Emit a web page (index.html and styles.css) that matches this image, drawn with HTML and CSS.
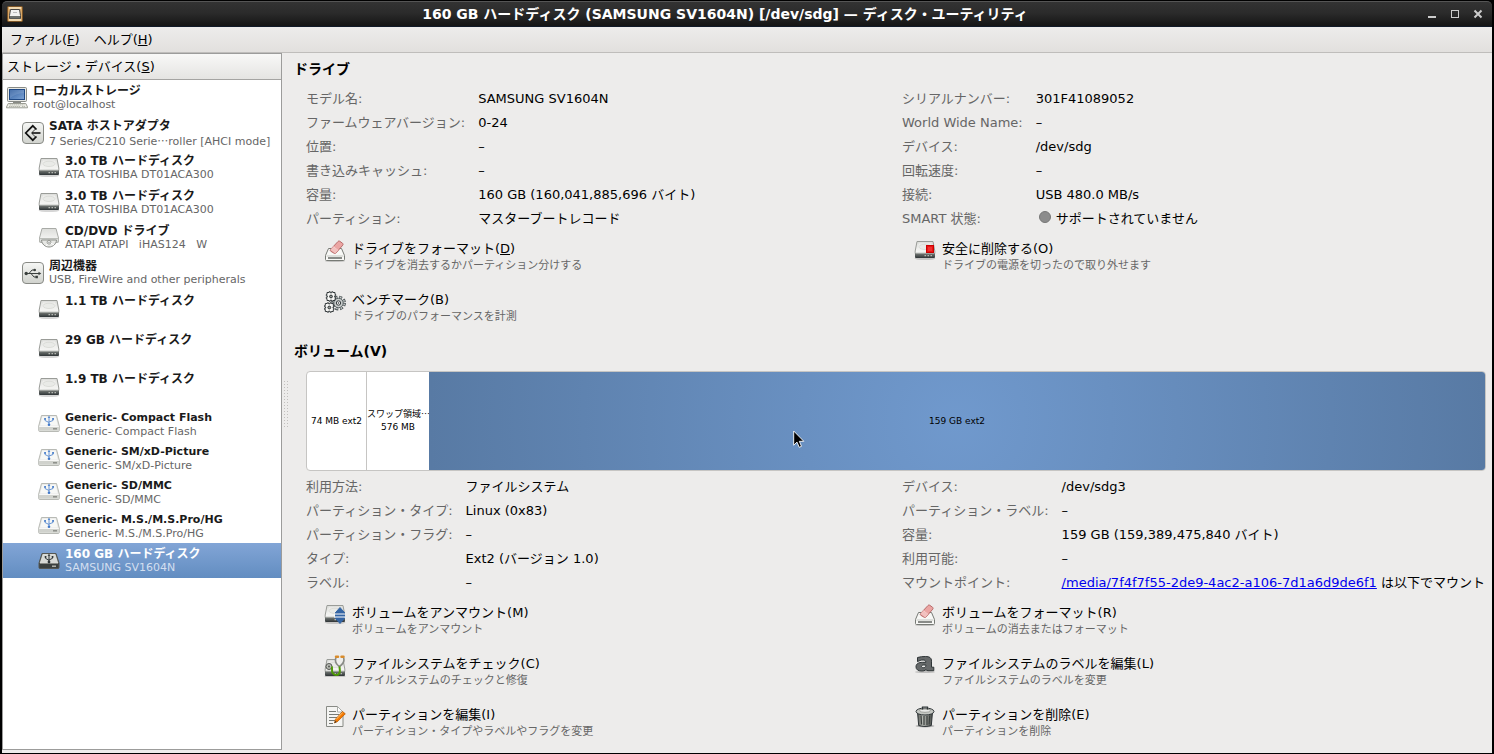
FILE: index.html
```
<!DOCTYPE html>
<html lang="ja">
<head>
<meta charset="utf-8">
<title>ディスク・ユーティリティ</title>
<link rel="stylesheet" href="styles.css">
</head>
<body>
<svg class="defs" aria-hidden="true">
  <defs>
    <linearGradient id="g-top" x1="0" y1="0" x2="0" y2="1"><stop offset="0" stop-color="#dcdddA"/><stop offset="1" stop-color="#fbfbfa"/></linearGradient>
    <linearGradient id="g-dark" x1="0" y1="0" x2="0" y2="1"><stop offset="0" stop-color="#7b7f7b"/><stop offset="1" stop-color="#2e3436"/></linearGradient>
    <linearGradient id="g-box" x1="0" y1="0" x2="0" y2="1"><stop offset="0" stop-color="#f6f7f5"/><stop offset="1" stop-color="#d0d2cd"/></linearGradient>
    <linearGradient id="g-screen" x1="0" y1="0" x2="1" y2="1"><stop offset="0" stop-color="#2d5c9f"/><stop offset="1" stop-color="#7fa5d6"/></linearGradient>
    <linearGradient id="g-can" x1="0" y1="0" x2="1" y2="0"><stop offset="0" stop-color="#555753"/><stop offset=".35" stop-color="#b8bbb5"/><stop offset="1" stop-color="#4a4d49"/></linearGradient>
    <symbol id="hdd" viewBox="0 0 22 22">
      <ellipse cx="11" cy="18.600" rx="10.500" ry="1.500" fill="#000" opacity=".16"/>
      <path d="M3 1.500h16l1.800 9.500v2.500H1.200V11z" fill="url(#g-top)" stroke="#9a9c98"/>
      <path d="M5 3.500h12l1.800 7.500c-4 2-11.600 2-15.600 0z" fill="#f1f1ef" opacity=".8"/>
      <path d="M5 6.500C6 3.500 16 3.500 17 6.500c.5 4-12.500 4-12 0z" fill="#e9eae7" stroke="#d4d6d1" stroke-width=".7"/>
      <path d="M1 13h20v3.700c0 .8-.4 1.300-1.200 1.300H2.200c-.8 0-1.200-.5-1.200-1.300z" fill="url(#g-dark)"/>
      <path d="M1.500 13h19" stroke="#c5c7c3"/>
      <path d="M10.500 15.700h1.500M13.500 15.700H15M16.500 15.700H18" stroke="#b5b8b2" stroke-width="1.300"/>
    </symbol>
    <symbol id="card" viewBox="0 0 22 22">
      <path d="M3.500 2.500h15L21.300 13v4.500c0 .6-.4 1-1 1H1.700c-.6 0-1-.4-1-1V13z" fill="#e2e3e0" stroke="#b8bab5"/>
      <path d="M4.300 3.400h13.400l2.200 9.100H2.100z" fill="#f7f8f6"/>
      <path d="M1.200 13.500h19.600v4H1.200z" fill="#d0d2cd"/><path d="M1.200 13.300h19.600" stroke="#fff"/>
      <path d="M15 15.800h4" stroke="#888a85" stroke-width="1.400"/>
      <path d="M11 4v8M7 6v1.500l4 2M15 6v1.500l-4 1.500" fill="none" stroke="#5a8bd0" stroke-width=".9"/>
      <path d="m11 2.800 1.300 2H9.700zM6.200 5h1.700v1.700H6.200zM14.200 5h1.700v1.700h-1.700z" fill="#4078c8"/><circle cx="11" cy="11.800" r="1.300" fill="#4078c8"/>
    </symbol>
    <symbol id="usbdisk" viewBox="0 0 22 22">
      <path d="M4 3.500h14l3 9.500v4.500c0 .6-.4 1-1 1H2c-.6 0-1-.4-1-1V13z" fill="#3b403e" stroke="#555753"/>
      <path d="M4.600 4h12.800l2.900 9H1.700z" fill="#d8dad6"/>
      <path d="M2 13.500h18" stroke="#888a85"/><path d="M14 16.200h4" stroke="#babdb6" stroke-width="1.400"/>
      <path d="M11 5v7M7.500 7v1.300l3.500 2M14.500 7v1.300L11 10" fill="none" stroke="#2e3436"/>
      <path d="m11 3.700 1.400 2H9.600zM6.700 6h1.700v1.700H6.700zM13.700 6h1.700v1.700h-1.700z" fill="#2e3436"/><circle cx="11" cy="12" r="1.400" fill="#2e3436"/>
    </symbol>
    <symbol id="cdrom" viewBox="0 0 22 22">
      <path d="M4 1.500h14l2.500 9.500v3.500c0 .8-.4 1-1 1h-17c-.6 0-1-.4-1-1V11z" fill="url(#g-top)" stroke="#a9aba7"/>
      <path d="M1.500 11.500h19v3.300h-19z" fill="#dcdedb" stroke="#b0b2ad" stroke-width=".8"/>
      <path d="M3.500 13h15c-.3 4-3.500 7-7.500 7s-7.200-3-7.500-7z" fill="#e7e8e5" stroke="#8d8f8a"/>
      <path d="m11 15-3 4M11 15l5 3" stroke="#fff"/>
      <circle cx="11" cy="15.200" r="1.900" fill="#fff" stroke="#999b96"/><circle cx="11" cy="15.200" r=".6" fill="#555753"/>
    </symbol>
    <symbol id="computer" viewBox="0 0 22 22">
      <rect x="1.500" y=".5" width="19" height="14" rx="1" fill="#e7e8e4" stroke="#888a85"/>
      <rect x="3.500" y="2.500" width="15" height="10" fill="url(#g-screen)" stroke="#204a87"/>
      <path d="M4 3h14v3C12 6.500 8 8 4 11z" fill="#fff" opacity=".12"/>
      <path d="M7 15h8v1.500H7z" fill="#888a85"/>
      <path d="M2.200 16.500h17.600l1.700 3.500v.8H.5V20z" fill="#eeeee8" stroke="#9b9d94"/>
      <path d="M3.500 17.900h15M3 19.500h11M16 19.500h3" stroke="#b6b8ad" stroke-dasharray="1.500 .5"/>
    </symbol>
    <symbol id="sata" viewBox="0 0 22 22">
      <rect x=".5" y=".5" width="21" height="21" rx="3.500" fill="url(#g-box)" stroke="#888a85"/>
      <path d="m14.500 7.500-3.700-3.700L3.700 11l7.100 7.200 3.700-3.700" fill="none" stroke="#111" stroke-width="1.700"/>
      <path d="M10 11h8.500" fill="none" stroke="#111" stroke-width="1.600"/>
      <path d="m13.500 7-4 4 4 4" fill="none" stroke="#111" stroke-width=".8"/>
    </symbol>
    <symbol id="usb" viewBox="0 0 22 22">
      <rect x=".5" y=".5" width="21" height="21" rx="3.500" fill="url(#g-box)" stroke="#888a85"/>
      <path d="M4 11.500h13M7 11.500l3-3.500h2.500M9 11.500l3 3.500h2" fill="none" stroke="#3b403e"/>
      <circle cx="4.200" cy="11.500" r="1.700" fill="#3b403e"/><circle cx="12.700" cy="8" r="1.300" fill="#3b403e"/><path d="m16.500 9.800 2.800 1.700-2.800 1.700zM13.500 13.800h2.400v2.400h-2.400z" fill="#3b403e"/>
    </symbol>
    <symbol id="erase" viewBox="0 0 22 22">
      <ellipse cx="11" cy="21" rx="10" ry="1" fill="#000" opacity=".18"/>
      <path d="M4.500 8.500h13l3 7v4c0 .6-.4 1-1 1h-17c-.6 0-1-.4-1-1v-4z" fill="#f8f8f6" stroke="#777a75"/>
      <path d="M2.500 16h17" stroke="#c5c7c2"/><path d="M4 18h14" stroke="#4d504d" stroke-width="1.300"/>
      <path d="m6.500 9.500 7.500-8c.5-.6 1.200-.6 1.800-.2l2.800 2c.6.500.6 1.200.2 1.800l-6.800 8c-.5.600-1.200.6-1.800.2L6.700 11.200c-.6-.5-.6-1.200-.2-1.700z" fill="#eba5a3" stroke="#b86b6a"/>
      <path d="m9.300 6.600 4.800 3.800" stroke="#f7d1d0"/><path d="m6.500 9.700 2.600-2.900 4.800 3.800-2.400 2.800z" fill="#f2c1bf"/>
    </symbol>
    <symbol id="gears" viewBox="0 0 22 22">
      <g fill="none">
        <circle cx="14.500" cy="12" r="5.800" stroke="#444d4f" stroke-width="3.200" stroke-dasharray="2.800 1.755"/>
        <circle cx="14.500" cy="12" r="5.700" stroke="#c8cccb" stroke-width="1.800" stroke-dasharray="1.500 2.977" stroke-dashoffset="-.65"/>
        <circle cx="14.500" cy="12" r="4.700" fill="#c8cccb" stroke="#5c6567"/><circle cx="14.500" cy="12" r="2.200" fill="#f3f3f2" stroke="#353c3e"/><circle cx="14.500" cy="12" r=".8" fill="#2e3436"/>
        <path d="M3 1.500h2V.8h1.300v1h1.400v-1H9v.7h2v2h.7v1.300h-1v1.400h1v1.300H11v2H9v.7H7.700v-1H6.300v1H5v-.7H3v-2h-.7V6.200h1V4.800h-1V3.500H3z" fill="#f6f6f4" stroke="#33393b"/>
        <circle cx="7" cy="5.500" r="1.400" fill="#9a9d99" stroke="#2e3436"/>
        <path d="M1.300 12.500h2v-.7h1.300v1H6v-1h1.300v.7h2v2h.7v1.300H9v1.400h1v1.300h-.7v2h-2v.7H6v-1H4.600v1H3.300v-.7h-2v-2H.6v-1.300h1v-1.400h-1v-1.300h.7z" fill="#f6f6f4" stroke="#33393b"/>
        <circle cx="5.300" cy="16.500" r="1.400" fill="#9a9d99" stroke="#2e3436"/>
      </g>
    </symbol>
    <symbol id="detach" viewBox="0 0 22 22">
      <use href="#hdd" width="22" height="22"/><rect x="12.500" y="5.500" width="7" height="7" fill="#e81515" stroke="#c00"/><rect x="14" y="7" width="4" height="4" fill="#f03030"/>
    </symbol>
    <symbol id="unmount" viewBox="0 0 22 22">
      <use href="#hdd" width="22" height="22"/><path d="M10.500 9.500h11v4.500h-11z" fill="#fff"/><path d="M16 3.500 20.800 9h-9.600zM16 19.500 11.200 14h9.600z" fill="#3465a4" stroke="#3465a4" stroke-linejoin="round"/><path d="M11 11.500h10" stroke="#3465a4" stroke-width="2"/>
    </symbol>
    <symbol id="check" viewBox="0 0 22 22">
      <use href="#hdd" y="3" width="22" height="22"/>
      <circle cx="5" cy="11.500" r="3" fill="#babdb6" stroke="#555753"/><circle cx="5" cy="11.500" r="1" fill="#555753"/>
      <path d="M12 2.500c-1.500 4 .5 7 3.500 9 3-2 5.500-5 4-9" fill="#eeeeec" stroke="#888a85" stroke-width="1.600"/>
      <path d="M12 1.700h2M17.500 1.700h2" stroke="#d98b2b" stroke-width="2.500" stroke-linecap="round"/>
      <path d="M7.500 11.500c1.500 2-.5 4 1.200 6.500 1.500 2.500 5.300 3 6.800 0 1-2 0-4 0-6.500" fill="none" stroke="#4e9a06" stroke-width="2"/>
    </symbol>
    <symbol id="edit" viewBox="0 0 22 22">
      <path d="M2.500.5h11L19 6v14.500H2.500z" fill="#f4f4f2" stroke="#888a85" stroke-linejoin="round"/>
      <path d="M13.500.5V6H19z" fill="#fff" stroke="#aaaca8"/>
      <path d="M5 5.500h7M5 8.500h10M5 11.500h8M5 14.500h6M5 17.500h4" stroke="#777a75"/>
      <path d="m18.500 5.500 2.800 2.300-7.500 7.500-3.300 1.700 1-3.800z" fill="#f57900" stroke="#b85b00" stroke-width=".8"/><path d="m18.800 6.400-6.600 7" stroke="#fdc070"/><path d="m10.500 17 .6-2 1.500 1z" fill="#2e3436"/>
    </symbol>
    <symbol id="label" viewBox="0 0 22 22">
      <ellipse cx="11" cy="17" rx="10" ry="1" fill="#000" opacity=".2"/>
      <path d="M3.500 6.700V2.500C6 1.700 9 1.500 11.500 1.500c4 0 6 1.300 6 4.700v6h2.300v3.500H14c-1 0-1.500-.3-2-1-1.200 1-2.700 1.300-4.500 1.300C4 16 2 14.500 2 11.800 2 8.800 4.700 7.300 8.500 7.300h3.300C11.800 5.500 10.800 5 9 5 7 5 5.300 5.700 3.500 6.700zM11.800 10H9.700c-1.400 0-2.200.5-2.200 1.400 0 .9.700 1.300 1.800 1.300 1.500 0 2.500-.8 2.500-2z" fill="#66696a" stroke="#2e3436" fill-rule="evenodd"/>
    </symbol>
    <symbol id="trash" viewBox="0 0 22 22">
      <ellipse cx="11" cy="20" rx="9.500" ry="1.500" fill="#000" opacity=".25"/>
      <path d="M3.500 6h15l-1.200 13.500c-3.500 1.300-9.100 1.300-12.600 0z" fill="url(#g-can)" stroke="#2e3436"/>
      <path d="M7 9.500l.6 9M10 10v9M13 10v9M15.700 9.500l-.6 9" stroke="#3b403e" stroke-width="1.200"/>
      <ellipse cx="11" cy="5.500" rx="9" ry="3.500" fill="#c5c8c3" stroke="#2e3436"/><ellipse cx="11" cy="4.700" rx="5.500" ry="1.600" fill="#e9eae7" stroke="#888a85" stroke-width=".7"/>
      <path d="M8.500 3.500V1h5v2.500" fill="none" stroke="#2e3436" stroke-width="1.200"/>
    </symbol>
  </defs>
</svg>

<div class="window">
  <header class="titlebar">
    <svg class="app-icon" viewBox="0 0 16 16" aria-hidden="true"><rect x=".5" y=".5" width="15" height="15" rx="1" fill="#d9a867" stroke="#7b5427"/><path d="M2 1h12v2H2zM2 13h12v2H2z" fill="#f1d9b0"/><path d="M3.500 3.500h9l1 6v3h-11v-3z" fill="#f2f2f0" stroke="#444"/><path d="M3 10h10v2.500H3z" fill="#6d706c"/><path d="M6 6.500h4" stroke="#bbb"/></svg>
    <h1 class="title">160 GB ハードディスク (SAMSUNG SV1604N) [/dev/sdg] — ディスク・ユーティリティ</h1>
    <div class="controls">
      <button type="button" aria-label="最小化"><svg viewBox="0 0 10 10"><path d="M1 8h8" stroke="#ccc" stroke-width="2"/></svg></button>
      <button type="button" aria-label="最大化"><svg viewBox="0 0 10 10"><path d="M1 1.500h8" stroke="#ccc" stroke-width="1"/><rect x="1.500" y="1.500" width="7" height="7" fill="none" stroke="#ccc"/></svg></button>
      <button type="button" aria-label="閉じる"><svg viewBox="0 0 10 10"><path d="m1.500 1.500 7 7m0-7-7 7" stroke="#ccc" stroke-width="2"/></svg></button>
    </div>
  </header>
  <nav class="menubar">
    <button type="button">ファイル(<u>F</u>)</button>
    <button type="button">ヘルプ(<u>H</u>)</button>
  </nav>
  <div class="body">
    <aside class="sidebar">
      <h2 class="side-head">ストレージ・デバイス(<u>S</u>)</h2>
      <ul class="tree">
        <li class="node"><svg><use href="#computer"/></svg><p><b>ローカルストレージ</b><span>root@localhost</span></p></li>
        <li class="node level-1"><svg><use href="#sata"/></svg><p><b>SATA ホストアダプタ</b><span>7 Series/C210 Serie<i class="dots">…</i>roller [AHCI mode]</span></p></li>
        <li class="node level-2"><svg><use href="#hdd"/></svg><p><b>3.0 TB ハードディスク</b><span>ATA TOSHIBA DT01ACA300</span></p></li>
        <li class="node level-2"><svg><use href="#hdd"/></svg><p><b>3.0 TB ハードディスク</b><span>ATA TOSHIBA DT01ACA300</span></p></li>
        <li class="node level-2"><svg><use href="#cdrom"/></svg><p><b>CD/DVD ドライブ</b><span>ATAPI ATAPI &nbsp; iHAS124 &nbsp; W</span></p></li>
        <li class="node level-1"><svg><use href="#usb"/></svg><p><b>周辺機器</b><span>USB, FireWire and other peripherals</span></p></li>
        <li class="node level-2 tall"><svg><use href="#hdd"/></svg><p><b>1.1 TB ハードディスク</b></p></li>
        <li class="node level-2 tall"><svg><use href="#hdd"/></svg><p><b>29 GB ハードディスク</b></p></li>
        <li class="node level-2 tall"><svg><use href="#hdd"/></svg><p><b>1.9 TB ハードディスク</b></p></li>
        <li class="node level-2 latin"><svg><use href="#card"/></svg><p><b>Generic- Compact Flash</b><span>Generic- Compact Flash</span></p></li>
        <li class="node level-2 latin"><svg><use href="#card"/></svg><p><b>Generic- SM/xD-Picture</b><span>Generic- SM/xD-Picture</span></p></li>
        <li class="node level-2 latin"><svg><use href="#card"/></svg><p><b>Generic- SD/MMC</b><span>Generic- SD/MMC</span></p></li>
        <li class="node level-2 latin"><svg><use href="#card"/></svg><p><b>Generic- M.S./M.S.Pro/HG</b><span>Generic- M.S./M.S.Pro/HG</span></p></li>
        <li class="node level-2 selected"><svg><use href="#usbdisk"/></svg><p><b>160 GB ハードディスク</b><span>SAMSUNG SV1604N</span></p></li>
      </ul>
    </aside>
    <div class="splitter"></div>
    <main class="main">
      <section>
        <h2 class="heading">ドライブ</h2>
        <div class="facts">
          <dl>
            <dt>モデル名:</dt><dd>SAMSUNG SV1604N</dd>
            <dt>ファームウェアバージョン:</dt><dd>0-24</dd>
            <dt>位置:</dt><dd>–</dd>
            <dt>書き込みキャッシュ:</dt><dd>–</dd>
            <dt>容量:</dt><dd>160 GB (160,041,885,696 バイト)</dd>
            <dt>パーティション:</dt><dd>マスターブートレコード</dd>
          </dl>
          <dl>
            <dt>シリアルナンバー:</dt><dd>301F41089052</dd>
            <dt>World Wide Name:</dt><dd>–</dd>
            <dt>デバイス:</dt><dd>/dev/sdg</dd>
            <dt>回転速度:</dt><dd>–</dd>
            <dt>接続:</dt><dd>USB 480.0 MB/s</dd>
            <dt>SMART 状態:</dt><dd class="smart">サポートされていません</dd>
          </dl>
        </div>
        <div class="actions">
          <button type="button" class="action"><svg><use href="#erase"/></svg><span class="name">ドライブをフォーマット(<u>D</u>)</span><span class="hint">ドライブを消去するかパーティション分けする</span></button>
          <button type="button" class="action"><svg><use href="#detach"/></svg><span class="name">安全に削除する(O)</span><span class="hint">ドライブの電源を切ったので取り外せます</span></button>
          <button type="button" class="action"><svg><use href="#gears"/></svg><span class="name">ベンチマーク(B)</span><span class="hint">ドライブのパフォーマンスを計測</span></button>
        </div>
      </section>
      <section class="volumes">
        <h2 class="heading">ボリューム(V)</h2>
        <div class="bar">
          <div class="part part-boot">74 MB ext2</div>
          <div class="part part-swap">スワップ領域<i class="dots">…</i><br>576 MB</div>
          <div class="part part-root">159 GB ext2</div>
          <svg class="pointer" viewBox="0 0 12 19" aria-hidden="true"><path d="M.7 1v14.200l3.300-3.100 2.200 5.200 2.300-1-2.200-5h4.500z" fill="#000" stroke="#fff" stroke-width=".9"/></svg>
        </div>
        <div class="facts">
          <dl>
            <dt>利用方法:</dt><dd>ファイルシステム</dd>
            <dt>パーティション・タイプ:</dt><dd>Linux (0x83)</dd>
            <dt>パーティション・フラグ:</dt><dd>–</dd>
            <dt>タイプ:</dt><dd>Ext2 (バージョン 1.0)</dd>
            <dt>ラベル:</dt><dd>–</dd>
          </dl>
          <dl>
            <dt>デバイス:</dt><dd>/dev/sdg3</dd>
            <dt>パーティション・ラベル:</dt><dd>–</dd>
            <dt>容量:</dt><dd>159 GB (159,389,475,840 バイト)</dd>
            <dt>利用可能:</dt><dd>–</dd>
            <dt>マウントポイント:</dt><dd><a href="#media">/media/7f4f7f55-2de9-4ac2-a106-7d1a6d9de6f1</a> は以下でマウント</dd>
          </dl>
        </div>
        <div class="actions">
          <button type="button" class="action"><svg><use href="#unmount"/></svg><span class="name">ボリュームをアンマウント(M)</span><span class="hint">ボリュームをアンマウント</span></button>
          <button type="button" class="action"><svg><use href="#erase"/></svg><span class="name">ボリュームをフォーマット(R)</span><span class="hint">ボリュームの消去またはフォーマット</span></button>
          <button type="button" class="action"><svg><use href="#check"/></svg><span class="name">ファイルシステムをチェック(C)</span><span class="hint">ファイルシステムのチェックと修復</span></button>
          <button type="button" class="action"><svg><use href="#label"/></svg><span class="name">ファイルシステムのラベルを編集(L)</span><span class="hint">ファイルシステムのラベルを変更</span></button>
          <button type="button" class="action"><svg><use href="#edit"/></svg><span class="name">パーティションを編集(I)</span><span class="hint">パーティション・タイプやラベルやフラグを変更</span></button>
          <button type="button" class="action"><svg><use href="#trash"/></svg><span class="name">パーティションを削除(E)</span><span class="hint">パーティションを削除</span></button>
        </div>
      </section>
    </main>
  </div>
</div>
</body>
</html>
```

FILE: styles.css
```
* { box-sizing: border-box; }
body, h1, h2, p, ul, dl, dd { margin: 0; padding: 0; }
body {
  background: #000;
  font: 13px/18px "DejaVu Sans", "Noto Sans CJK JP", sans-serif;
  color: #000;
}
button { border: 0; padding: 0; background: none; font: inherit; color: inherit; text-align: left; }
h1, h2 { font-size: 14px; }
.defs { position: absolute; width: 0; height: 0; }
.window {
  display: flex;
  flex-direction: column;
  min-height: 100vh;
  border: 1px solid #000;
  border-width: 1px 2px;
  border-radius: 5px 5px 0 0;
}

.titlebar {
  display: flex;
  align-items: center;
  height: 26px;
  padding: 0 9px 0 5px;
  border-top: 1px solid #555;
  border-bottom: 1px solid #111a28;
  border-radius: 5px 5px 0 0;
  background: linear-gradient(#333, #2b2b2b 45%, #151515);
}
.app-icon { width: 16px; height: 16px; }
.title { flex: 1; text-align: center; color: #fff; white-space: nowrap; }
.controls { display: flex; gap: 13px; }
.controls svg { display: block; width: 10px; height: 10px; }

.menubar {
  display: flex;
  gap: 14px;
  padding: 4px 8px 3px;
  border-bottom: 1px solid #bfbdbb;
  background: linear-gradient(#edeceb, #e2e0de);
}

.body { flex: 1; display: flex; background: #edeceb; }
.sidebar {
  width: 280px;
  margin-bottom: 3px;
  border: 1px solid #9c9c9b;
  background: #fff;
}
.side-head {
  padding: 4px 4px 3px;
  border-bottom: 1px solid #a5a4a2;
  background: linear-gradient(#f8f8f7, #e5e4e2);
  font-size: 13px;
  font-weight: normal;
}
.tree { list-style: none; font-size: 11px; line-height: 14px; color: #1a1a1a; }
.node { display: flex; align-items: center; gap: 5px; height: 35px; padding-left: 3px; white-space: nowrap; }
.node svg { flex: none; width: 22px; height: 22px; }
.node p { align-self: flex-start; padding-top: 4px; }
.node b, .node p span { display: block; }
.node b { font-size: 12px; }
.node p span { color: #666; }
.level-1 { padding-left: 19px; }
.level-2 { padding-left: 35px; }
.tall { height: 39px; }
.latin { height: 34px; }
.latin b { font-size: 11px; }
.selected { background: linear-gradient(#82a5d6, #628dc1); color: #fff; }
.selected p span { color: #d3dff0; }
.dots { font-family: "Noto Sans CJK JP", sans-serif; font-style: normal; }

.splitter {
  align-self: center;
  width: 5px;
  height: 47px;
  margin-left: 1px;
  background: radial-gradient(circle, #c2c0be 1px, transparent 1px) 0 0 / 3px 3px;
}

.main { flex: 1; min-width: 0; padding: 7px 6px 0; }
.volumes { padding-top: 7px; }
.facts, .actions { display: grid; grid-template-columns: 1fr 1fr; padding-left: 12px; }
.facts { column-gap: 12px; padding-top: 9px; }
.volumes .facts { padding-top: 4px; }
dl { display: grid; grid-template-columns: max-content 1fr; column-gap: 13px; align-content: start; line-height: 24px; white-space: nowrap; }
dt { color: #666; }
a { color: #00e; }
.smart::before {
  content: "";
  display: inline-block;
  width: 10px;
  height: 10px;
  margin: 0 5px 0 3px;
  border: 1px solid #777;
  border-radius: 50%;
  background: #8c8c8c;
}
.actions { padding-top: 2px; }
.action {
  display: grid;
  grid-template-columns: 22px 1fr;
  column-gap: 6px;
  align-content: start;
  height: 51px;
  padding: 7px 0 0 18px;
}
.action svg { grid-row: 1 / 3; width: 22px; height: 22px; }
.hint { font-size: 11px; line-height: 16px; color: #666; }

.bar {
  position: relative;
  display: flex;
  height: 100px;
  margin: 11px 0 0 12px;
  border: 1px solid #c6c5c3;
  border-radius: 4px;
  overflow: hidden;
  background: #fff;
  font-size: 9px;
  line-height: 13px;
}
.part { display: flex; flex-direction: column; align-items: center; justify-content: center; white-space: nowrap; }
.part-boot { width: 60px; border-right: 1px solid #c6c5c3; }
.part-swap { display: block; width: 62px; padding-top: 35px; text-align: center; }
.part-root { flex: 1; background: radial-gradient(circle, #7099cd, #587aa4 528px); }
.pointer { position: absolute; left: 486px; top: 58px; width: 12px; height: 19px; }
```
